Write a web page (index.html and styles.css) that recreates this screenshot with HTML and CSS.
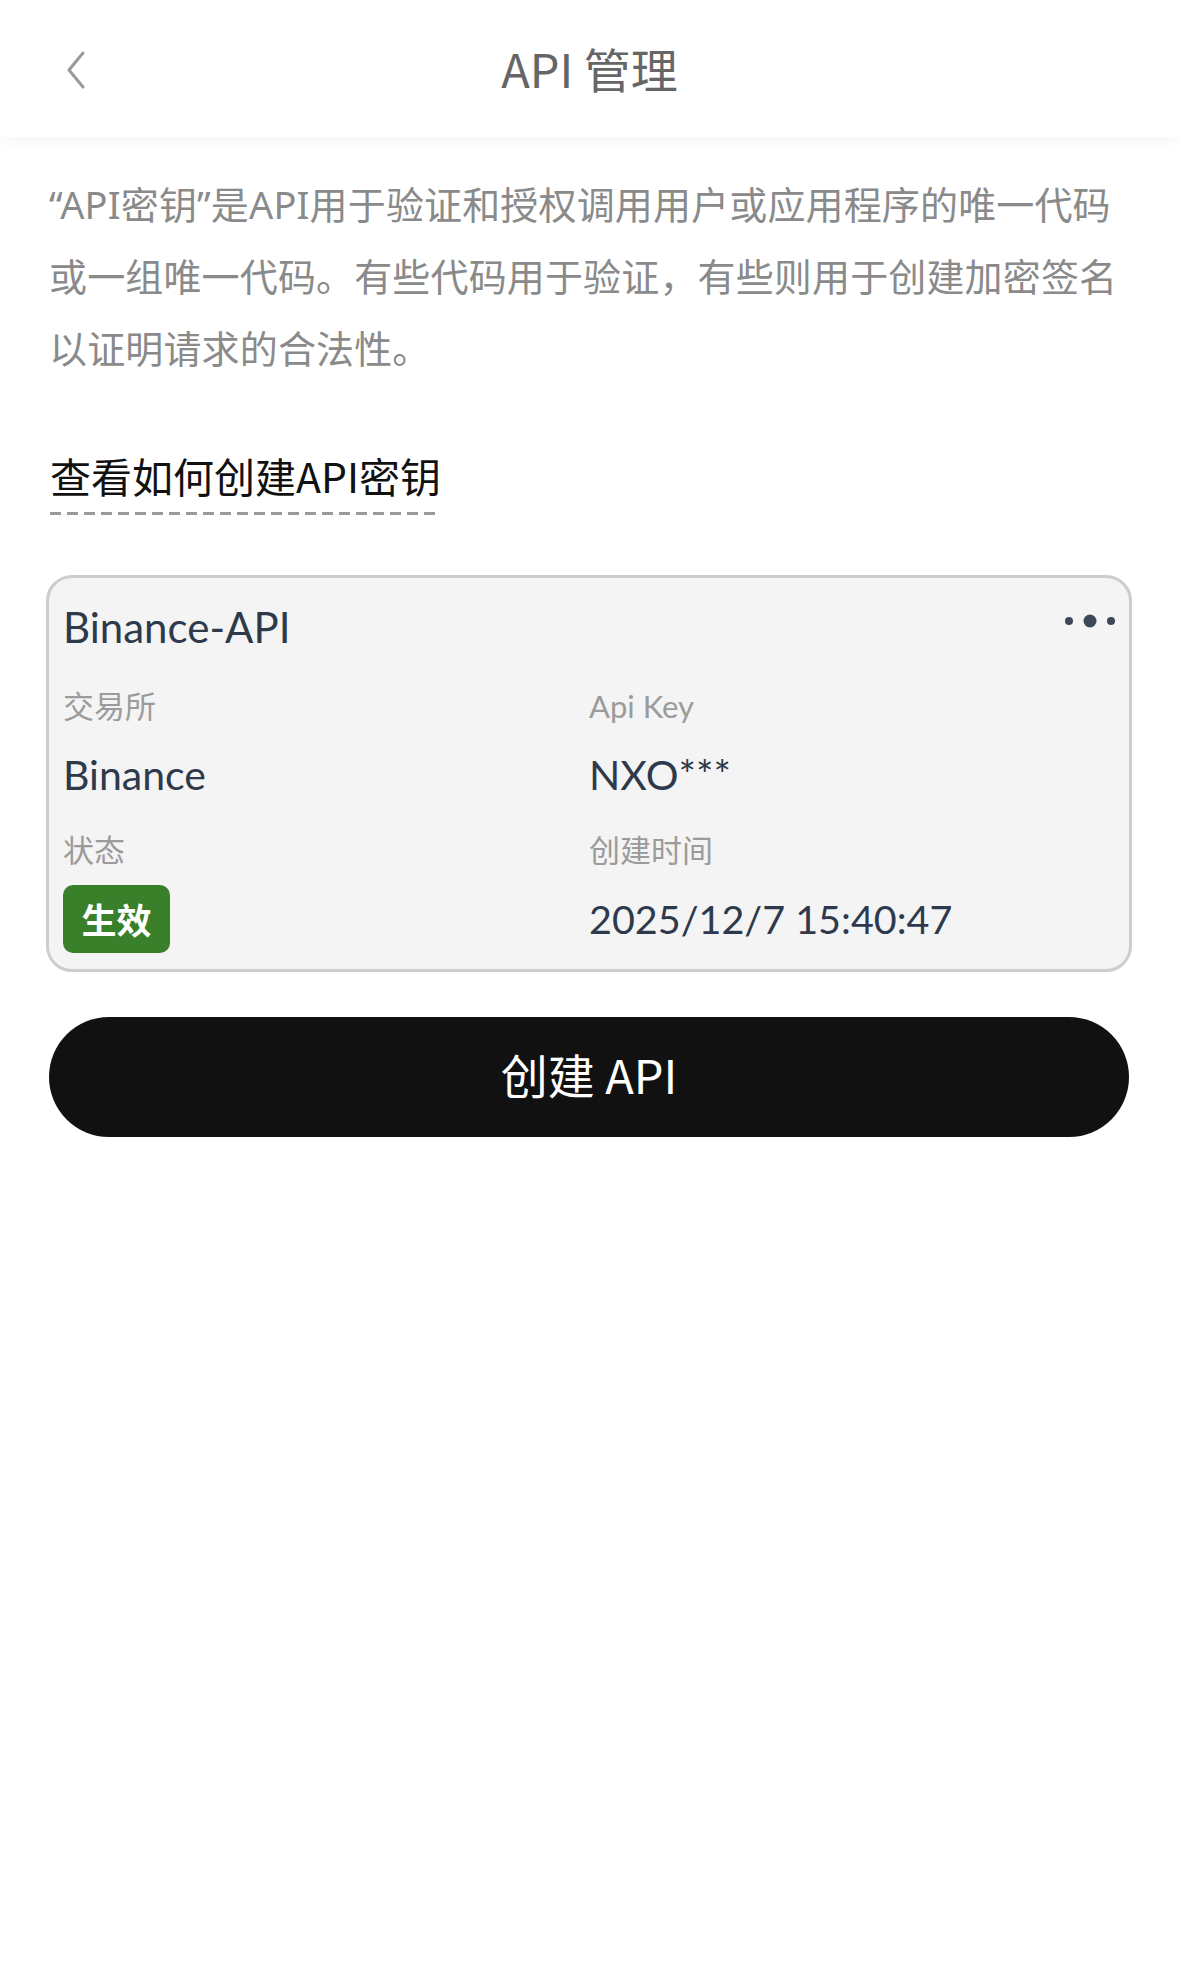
FILE: index.html
```html
<!DOCTYPE html>
<html lang="zh-CN">
<head>
<meta charset="utf-8">
<title>API 管理</title>
<link rel="stylesheet" href="styles.css">
</head>
<body>
<header class="topbar">
  <button class="back" aria-label="返回">
    <svg width="24" height="42" viewBox="0 0 24 42"><polyline points="19,4 5,21 19,38" fill="none" stroke="#9a9a9a" stroke-width="3" stroke-linecap="round" stroke-linejoin="round"/></svg>
  </button>
  <h1 class="title">API 管理</h1>
  <span class="spacer"></span>
</header>
<main class="content">
  <p class="intro">“API密钥”是API用于验证和授权调用用户或应用程序的唯一代码或一组唯一代码。有些代码用于验证，有些则用于创建加密签名以证明请求的合法性。</p>
  <a class="howto" href="#">查看如何创建API密钥</a>
  <section class="card">
    <div class="card-head">
      <span class="card-name">Binance-API</span>
      <svg class="more" width="50" height="14" viewBox="0 0 50 14"><circle cx="4" cy="7" r="4" fill="#3c4858"/><circle cx="25" cy="7" r="6.5" fill="#3c4858"/><circle cx="46" cy="7" r="4" fill="#3c4858"/></svg>
    </div>
    <div class="fields">
      <div class="field">
        <div class="label">交易所</div>
        <div class="value">Binance</div>
      </div>
      <div class="field">
        <div class="label">Api Key</div>
        <div class="value">NXO***</div>
      </div>
      <div class="field">
        <div class="label">状态</div>
        <div class="value"><span class="badge">生效</span></div>
      </div>
      <div class="field">
        <div class="label">创建时间</div>
        <div class="value value-time">2025/12/7 15:40:47</div>
      </div>
    </div>
  </section>
  <button class="create">创建 API</button>
</main>
</body>
</html>
```
FILE: styles.css
```css
html, body {
  margin: 0;
  padding: 0;
  background: #ffffff;
}
body {
  font-family: "Noto Sans", "Noto Sans CJK SC", sans-serif;
}
.topbar {
  height: 137px;
  display: grid;
  grid-template-columns: 1fr auto 1fr;
  align-items: center;
  background: #fff;
  box-shadow: 0 6px 16px rgba(0, 0, 0, 0.035);
  position: relative;
  z-index: 1;
}
.back {
  justify-self: start;
  margin-left: 64px;
  margin-top: 2px;
  padding: 0;
  border: 0;
  background: none;
  width: 24px;
  height: 42px;
  display: block;
}
.back svg { display: block; }
.title {
  margin: 0;
  font-family: "Noto Sans CJK SC", sans-serif;
  font-weight: 400;
  font-size: 47px;
  color: #666;
  line-height: 60px;
  margin-top: -1px;
}
.content {
  padding: 31px 50px 0 49px;
  display: flex;
  flex-direction: column;
  align-items: flex-start;
}
.intro {
  margin: 0;
  font-size: 38px;
  line-height: 72px;
  color: #8a8a8a;
  font-family: "Noto Sans", "Noto Sans CJK SC", sans-serif;
  letter-spacing: 0.15px;
}
.howto {
  margin-top: 67px;
  font-family: "Noto Sans CJK SC", sans-serif;
  font-size: 41px;
  line-height: 48px;
  color: #111;
  text-decoration: none;
  padding-bottom: 16px;
  margin-left: 1px;
  background: linear-gradient(to right, #9a9a9a 11px, transparent 11px) left bottom / 17px 3px repeat-x;
}
.card {
  align-self: stretch;
  margin: 60px -3px 0 -3px;
  background: #f4f4f4;
  border: 3px solid #cdcdcd;
  border-radius: 26px;
  padding: 24px 14px 16px 14px;
  font-family: "Lato", "Noto Sans CJK SC", sans-serif;
}
.card-head {
  display: flex;
  justify-content: space-between;
  align-items: flex-start;
  height: 50px;
}
.card-name {
  font-size: 42px;
  line-height: 50px;
  color: #2e3a4b;
}
.more {
  margin-top: 12px;
  display: block;
}
.fields {
  margin-top: 34px;
  display: grid;
  grid-template-columns: 1fr 1fr;
  row-gap: 21px;
}
.field {
  display: flex;
  flex-direction: column;
  gap: 15px;
}
.label {
  font-family: "Lato", "Noto Sans CJK SC", sans-serif;
  font-size: 31px;
  line-height: 40px;
  height: 40px;
  color: #9b9b9b;
}
.value {
  font-size: 41px;
  line-height: 68px;
  height: 68px;
  color: #2e3a4b;
}
.value-time {
  font-size: 39.5px;
}
.badge {
  display: inline-flex;
  align-items: center;
  justify-content: center;
  width: 107px;
  height: 68px;
  border-radius: 10px;
  background: #3a7f2a;
  color: #fff;
  font-family: "Noto Sans CJK SC", sans-serif;
  font-weight: 700;
  font-size: 35px;
  line-height: 68px;
  vertical-align: top;
}
.create {
  align-self: stretch;
  margin-top: 45px;
  height: 120px;
  border: 0;
  border-radius: 60px;
  background: #111;
  color: #fff;
  font-family: "Noto Sans CJK SC", sans-serif;
  font-size: 47px;
  font-weight: 400;
  padding: 0 0 8px 0;
}
```
